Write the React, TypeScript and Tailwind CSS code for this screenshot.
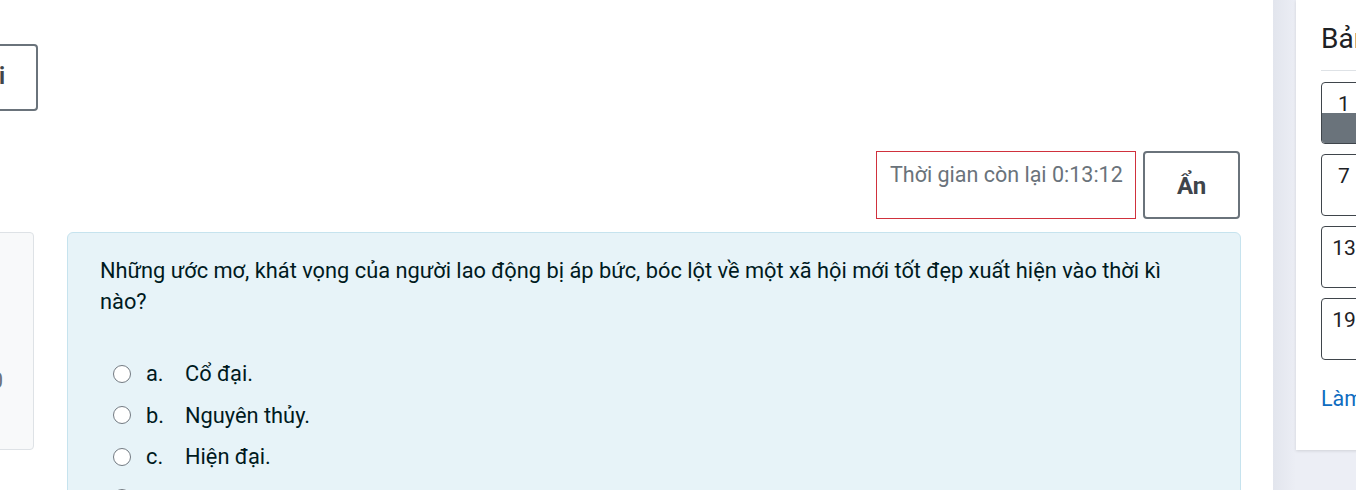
import React from "react";

const font = { fontFamily: "Roboto, 'Liberation Sans', sans-serif" };

function Option({ letter, text }: { letter: string; text: string }) {
  return (
    <div className="flex items-center h-[41.5px]">
      <span className="ml-[13px] w-[18px] h-[18px] rounded-full border-[1.5px] border-[#737a82] bg-white shrink-0" />
      <span className="ml-[15px] w-[39px] shrink-0">{letter}</span>
      <span>{text}</span>
    </div>
  );
}

export default function App() {
  return (
    <div
      className="w-[1356px] h-[490px] overflow-hidden flex bg-white text-[#1d2125]"
      style={font}
    >
      {/* Main area */}
      <div className="w-[1273px] shrink-0 bg-white flex flex-col overflow-hidden">
        <div className="pt-[44px] h-[111px]">
          <div className="-ml-[82px] w-[120px] h-[67px] border-2 border-[#6a737b] rounded-[4px] flex items-center justify-end pr-[31px] text-[23px] font-bold text-[#3f454b]">
            Lưu bài
          </div>
        </div>
        <div className="mt-[40px] flex justify-end pr-[33px] gap-[7px]">
          <div className="w-[260px] h-[68px] border border-[#d0313d] pt-[9px] pl-[13px] text-[21.5px] text-[#6a737b] leading-[28px] whitespace-nowrap">
            Thời gian còn lại 0:13:12
          </div>
          <div className="w-[97px] h-[68px] border-2 border-[#6a737b] rounded-[4px] flex items-center justify-center pt-[2px] text-[24px] font-bold text-[#3f454b]">
            Ẩn
          </div>
        </div>
        <div className="mt-[13px] flex gap-[33px] flex-1 min-h-0">
          <div className="-ml-[100px] w-[134px] h-[218px] shrink-0 border border-[#dee2e6] rounded-[4px] bg-[#f8f9fa] flex items-center justify-end pr-[30px] pt-[80px] text-[21.5px] text-[#6a737b]">
            10
          </div>
          <div className="w-[1174px] h-[300px] shrink-0 bg-[#e7f3f8] border border-[#c6e3ee] rounded-[6px] pl-[32px] pt-[22px] text-[21.8px] leading-[31px] text-[#001a1e]">
            <div className="whitespace-nowrap">
              Những ước mơ, khát vọng của người lao động bị áp bức, bóc lột về một xã hội mới tốt đẹp xuất hiện vào thời kì
              <br />
              nào?
            </div>
            <div className="mt-[36px]">
              <Option letter="a." text="Cổ đại." />
              <Option letter="b." text="Nguyên thủy." />
              <Option letter="c." text="Hiện đại." />
              <Option letter="d." text="Cận đại." />
            </div>
          </div>
        </div>
      </div>

      {/* Right drawer */}
      <div className="flex-1 bg-[#eceef5] flex">
        <div className="w-[23px] shrink-0 bg-gradient-to-r from-[#e2e5ed] to-[#eceef5]" />
        <div className="flex-1 h-[450px] bg-white shadow-[0_1px_3px_rgba(0,0,0,0.12)] pl-[25px] overflow-hidden">
          <div className="pt-[22px] h-[71px] border-b border-[#dee2e6] text-[28px] leading-[34px] whitespace-nowrap">
            Bảng điều hướng
          </div>
          <div className="mt-[11px] flex flex-col gap-[10px]">
            {["1", "7", "13", "19"].map((n, i) => (
              <div
                key={n}
                className="w-[46px] h-[62px] border border-[#3f454b] rounded-[4px] overflow-hidden flex flex-col shrink-0"
              >
                <div className="h-[30px] pt-[9px] flex justify-center text-[21px] leading-[24px] text-[#1d2125]">
                  {n}
                </div>
                <div className={i === 0 ? "flex-1 bg-[#6a737b]" : "flex-1"} />
              </div>
            ))}
          </div>
          <div className="mt-[24px] text-[21.5px] leading-[30px] text-[#0f6cbf] whitespace-nowrap">
            Làm xong...
          </div>
        </div>
      </div>
    </div>
  );
}
